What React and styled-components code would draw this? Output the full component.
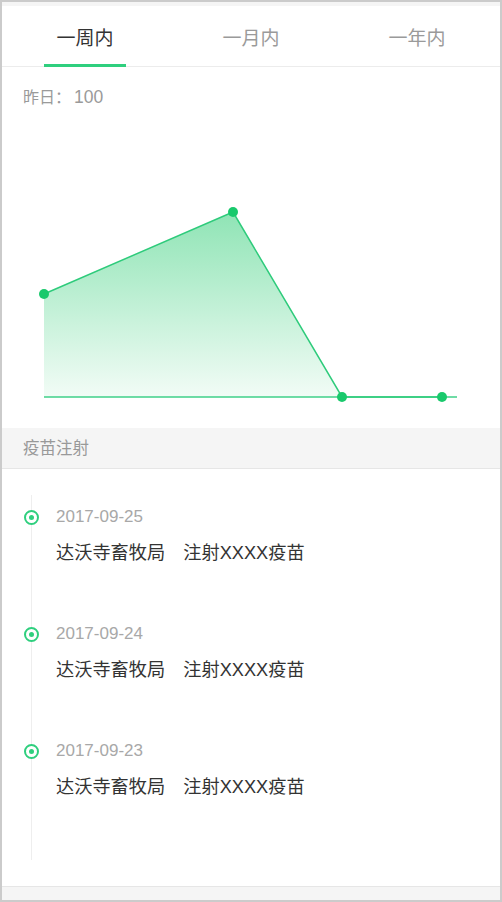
import React from 'react';
import styled, { createGlobalStyle } from 'styled-components';

const GlobalStyle = createGlobalStyle`
    html, body {
        margin: 0;
        padding: 0;
        background: #fff;
    }
    body {
        font-family: "Liberation Sans", "Noto Sans CJK SC", sans-serif;
    }
`;

const Frame = styled.div`
    box-sizing: border-box;
    width: 502px;
    height: 902px;
    border: 2px solid #cbcbcb;
    background: #f5f5f5;
    padding-top: 4px;
    display: flex;
    flex-direction: column;
`;

const Tabs = styled.div`
    display: grid;
    grid-template-columns: repeat(3, 1fr);
    height: 60px;
    background: #fff;
    border-bottom: 1px solid #ececec;
`;

const Tab = styled.div`
    position: relative;
    display: flex;
    align-items: center;
    justify-content: center;
    font-size: 19px;
    color: ${props => (props.active ? '#333' : '#9a9a9a')};

    &::after {
        content: '';
        display: ${props => (props.active ? 'block' : 'none')};
        position: absolute;
        bottom: -1px;
        left: 50%;
        width: 82px;
        margin-left: -41px;
        height: 3px;
        background: #2fcf7e;
    }
`;

const ChartPanel = styled.div`
    background: #fff;
    padding: 20px 0 8px;
`;

const Yesterday = styled.div`
    height: 20px;
    padding-left: 21px;
    font-size: 16px;
    line-height: 20px;
    color: #9a9a9a;
    overflow: hidden;
`;

const Num = styled.span`
    font-size: 17.5px;
    margin-left: 3px;
`;

const ChartSvg = styled.svg`
    display: block;
    margin-top: 13px;
    width: 498px;
    height: 300px;
`;

const SectionHeader = styled.div`
    height: 40px;
    line-height: 40px;
    padding-left: 21px;
    background: #f5f5f5;
    border-bottom: 1px solid #e6e6e6;
    font-size: 16.5px;
    color: #999;
`;

const TimelinePanel = styled.div`
    flex: 1;
    background: #fff;
    padding-top: 26px;
    border-bottom: 1px solid #e6e6e6;
    margin-bottom: 13px;
`;

const TimelineList = styled.div`
    margin-left: 29px;
    border-left: 1px solid #eeeeee;
    padding-bottom: 14px;
    width: 440px;
`;

const Item = styled.div`
    position: relative;
    height: 117px;
    box-sizing: border-box;
    padding: 11px 0 0 24px;
`;

const Dot = styled.span`
    position: absolute;
    left: -8px;
    top: 15px;
    width: 11px;
    height: 11px;
    border: 2px solid #2fcf7e;
    border-radius: 50%;
    background: #fff;

    &::after {
        content: '';
        position: absolute;
        left: 3px;
        top: 3px;
        width: 5px;
        height: 5px;
        border-radius: 50%;
        background: #2fcf7e;
    }
`;

const DateText = styled.div`
    font-size: 17px;
    line-height: 22px;
    color: #a8a8a8;
`;

const Desc = styled.div`
    margin-top: 13px;
    font-size: 18.2px;
    line-height: 24px;
    color: #333;
`;

const points = [
    [42, 174],
    [231, 92],
    [340, 277],
    [440, 277],
];

const Chart = () => {
    const line = points.map(p => p.join(',')).join(' ');
    const area = `42,277 ${points.slice(0, 3).map(p => p.join(',')).join(' ')}`;
    return (
        <ChartSvg viewBox='0 0 498 300'>
            <defs>
                <linearGradient id='fill' x1='0' y1='0' x2='0' y2='1'>
                    <stop offset='0' stopColor='#8fe4b5' />
                    <stop offset='1' stopColor='#f2fcf6' />
                </linearGradient>
            </defs>
            <polygon points={area} fill='url(#fill)' />
            <line x1='42' y1='277' x2='455' y2='277' stroke='#3fd189' strokeWidth='1.5' />
            <polyline points={line} fill='none' stroke='#2ecb7b' strokeWidth='1.5' />
            {points.map(([x, y]) => (
                <circle key={x} cx={x} cy={y} r='5' fill='#19c96c' />
            ))}
        </ChartSvg>
    );
};

const records = ['2017-09-25', '2017-09-24', '2017-09-23'];

export default function App() {
    return (
        <>
            <GlobalStyle />
            <Frame>
                <Tabs>
                    <Tab active>一周内</Tab>
                    <Tab>一月内</Tab>
                    <Tab>一年内</Tab>
                </Tabs>
                <ChartPanel>
                    <Yesterday>
                        昨日：<Num>100</Num>
                    </Yesterday>
                    <Chart />
                </ChartPanel>
                <SectionHeader>疫苗注射</SectionHeader>
                <TimelinePanel>
                    <TimelineList>
                        {records.map(date => (
                            <Item key={date}>
                                <Dot />
                                <DateText>{date}</DateText>
                                <Desc>达沃寺畜牧局　注射XXXX疫苗</Desc>
                            </Item>
                        ))}
                    </TimelineList>
                </TimelinePanel>
            </Frame>
        </>
    );
}
